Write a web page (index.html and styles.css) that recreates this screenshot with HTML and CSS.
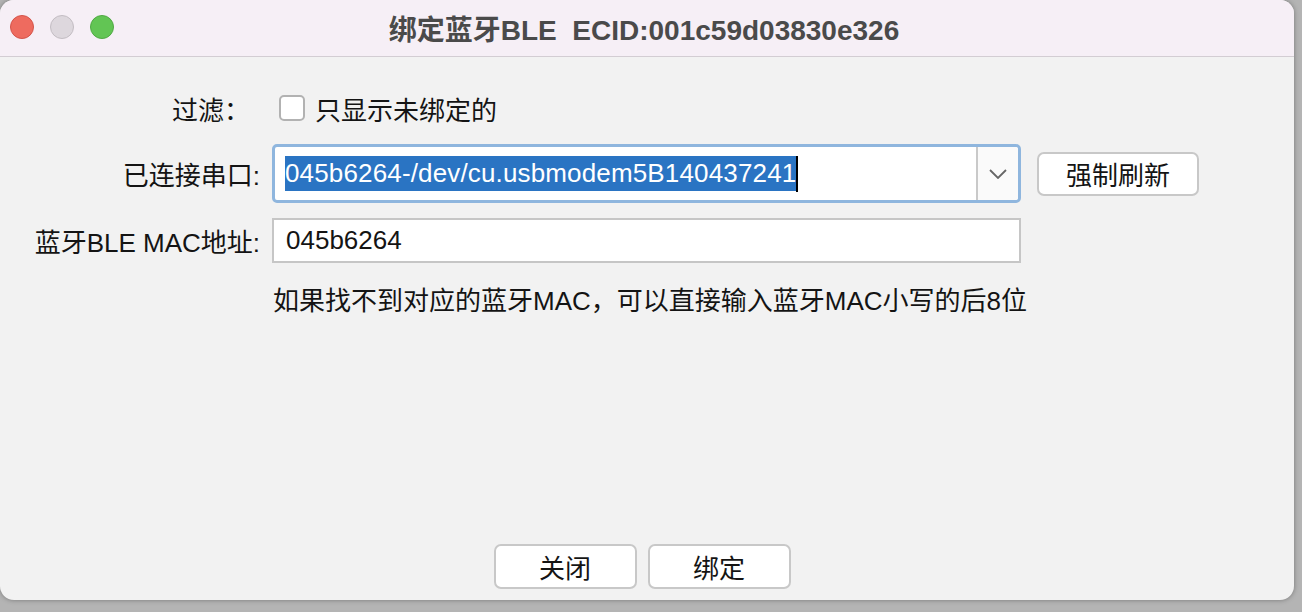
FILE: index.html
```html
<!DOCTYPE html>
<html lang="zh-CN">
<head>
    <meta charset="UTF-8">
    <meta name="viewport" content="width=device-width, initial-scale=1.0">
    <title>绑定蓝牙BLE</title>
    <link rel="stylesheet" href="styles.css">
</head>
<body>
    <div class="window">
        <div class="titlebar">
            <div class="lights">
                <span class="light close"></span>
                <span class="light min"></span>
                <span class="light max"></span>
            </div>
            <div class="title">绑定蓝牙BLE&nbsp;&nbsp;ECID:001c59d03830e326</div>
        </div>

        <div class="content">
            <div class="row row-filter">
                <label class="label">过滤：</label>
                <label class="check">
                    <span class="check-box"></span>
                    <span>只显示未绑定的</span>
                </label>
            </div>

            <div class="row row-port">
                <label class="label">已连接串口:</label>
                <div class="combo">
                    <div class="combo-text">
                        <span class="selected">045b6264-/dev/cu.usbmodem5B140437241</span><span class="caret"></span>
                    </div>
                    <div class="combo-arrow">
                        <svg width="18" height="10" viewBox="0 0 18 10">
                            <path d="M1 1 L9 9 L17 1" fill="none" stroke="#666" stroke-width="1.8"/>
                        </svg>
                    </div>
                </div>
                <button class="btn btn-refresh">强制刷新</button>
            </div>

            <div class="row row-mac">
                <label class="label">蓝牙BLE MAC地址:</label>
                <div class="input">045b6264</div>
            </div>

            <div class="row row-hint">
                <span class="label"></span>
                <span class="hint">如果找不到对应的蓝牙MAC，可以直接输入蓝牙MAC小写的后8位</span>
            </div>
        </div>

        <div class="footer">
            <button class="btn btn-footer">关闭</button>
            <button class="btn btn-footer">绑定</button>
        </div>
    </div>
</body>
</html>
```

FILE: styles.css
```css
body {
    margin: 0;
    width: 1302px;
    height: 612px;
    overflow: hidden;
    background-color: #b4b4b4;
    font-family: 'Liberation Sans', 'Noto Sans CJK SC', sans-serif;
    font-size: 26px;
    color: #141414;
}
.window {
    width: 1294px;
    height: 600px;
    background-color: #f2f2f2;
    border-radius: 14px;
    box-shadow: 0 0 5px rgba(0,0,0,0.35);
    display: flex;
    flex-direction: column;
    overflow: hidden;
}
.titlebar {
    height: 56px;
    flex: none;
    background-color: #f6eff6;
    border-bottom: 1px solid #d3cdd3;
    display: flex;
    align-items: center;
    position: relative;
}
.lights {
    position: absolute;
    left: 10px;
    top: 15px;
    display: flex;
    gap: 16px;
}
.light {
    width: 22px;
    height: 22px;
    border-radius: 50%;
    border: 1px solid;
}
.light.close {
    background-color: #ee6b5f;
    border-color: #d4544a;
}
.light.min {
    background-color: #ddd7dd;
    border-color: #c3bdc3;
}
.light.max {
    background-color: #62c554;
    border-color: #50a944;
}
.title {
    flex: 1;
    text-align: center;
    font-size: 28px;
    font-weight: bold;
    color: #4a4a4a;
    padding-right: 6px;
}
.content {
    flex: 1;
    padding-top: 31px;
}
.row {
    display: flex;
    align-items: center;
    gap: 12px;
}
.label {
    width: 260px;
    flex: none;
    text-align: right;
    white-space: nowrap;
}
.row-filter {
    height: 40px;
}
.row-filter .label {
    width: 250px;
    margin-right: 10px;
}
.check {
    display: flex;
    align-items: center;
    gap: 10px;
    margin-left: 7px;
}
.check-box {
    width: 22px;
    height: 22px;
    background-color: #fff;
    border: 2px solid #b2b2b2;
    border-radius: 5px;
}
.row-port {
    margin-top: 16px;
}
.combo {
    width: 743px;
    height: 53px;
    display: flex;
    background-color: #fff;
    border: 3px solid #8fb6de;
    border-radius: 5px;
}
.combo-text {
    flex: 1;
    display: flex;
    align-items: center;
    padding-left: 10px;
}
.selected {
    background-color: #2a74c3;
    color: #fff;
    line-height: 35px;
    letter-spacing: 0.15px;
}
.caret {
    width: 2px;
    height: 36px;
    background-color: #000;
}
.combo-arrow {
    width: 40px;
    border-left: 2px solid #c9c9c9;
    background-color: #fafafa;
    border-radius: 0 3px 3px 0;
    display: flex;
    align-items: center;
    justify-content: center;
}
.btn {
    font-family: 'Liberation Sans', 'Noto Sans CJK SC', sans-serif;
    font-size: 26px;
    color: #141414;
    background-color: #fff;
    border: 2px solid #c8c8c8;
    border-radius: 7px;
    padding: 0;
}
.btn-refresh {
    width: 162px;
    height: 44px;
    margin-left: 4px;
}
.row-mac {
    margin-top: 15px;
}
.input {
    width: 733px;
    height: 41px;
    line-height: 41px;
    padding-left: 12px;
    background-color: #fff;
    border: 2px solid #c6c6c6;
}
.row-hint {
    margin-top: 17px;
    height: 36px;
}
.hint {
    margin-left: 1px;
    white-space: nowrap;
}
.footer {
    flex: none;
    display: flex;
    justify-content: center;
    gap: 11px;
    padding-bottom: 11px;
    padding-right: 10px;
}
.btn-footer {
    width: 143px;
    height: 45px;
}
```
